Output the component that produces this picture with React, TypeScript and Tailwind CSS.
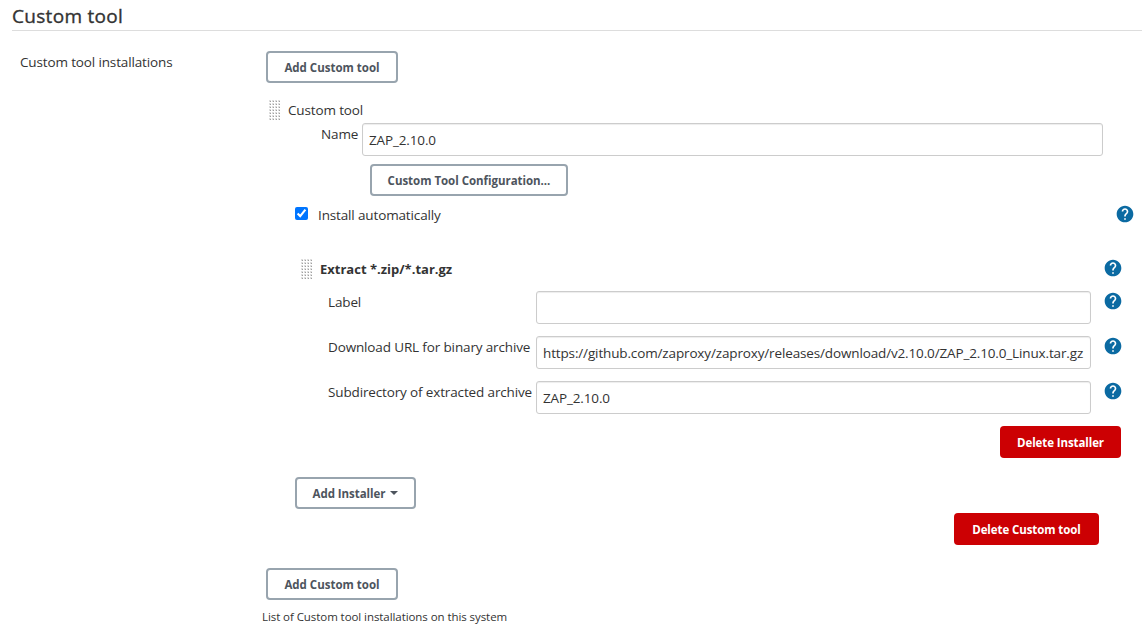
import type { ReactNode } from "react";
import { MdHelp } from "react-icons/md";

function Grip() {
  const rows = [0, 3, 6, 9, 12, 15, 18];
  const cols = [0, 3, 6, 9];
  return (
    <svg width="12" height="20" viewBox="0 0 12 20" className="block shrink-0" shapeRendering="crispEdges">
      {rows.map((y) =>
        cols.map((x) => (
          <g key={`${x}-${y}`}>
            <path d={`M${x} ${y}h2v2h-2z`} fill="#dedede" />
            <path d={`M${x + 1} ${y + 1}h1v1h-1z`} fill="#a0a0a0" />
          </g>
        ))
      )}
    </svg>
  );
}

function Help({ className = "" }: { className?: string }) {
  return (
    <button type="button" aria-label="Help" className={`block h-5 w-5 shrink-0 text-[#0b6aa2] ${className}`}>
      <MdHelp size={20} />
    </button>
  );
}

function Button({ children, className, danger }: { children: ReactNode; className: string; danger?: boolean }) {
  const tone = danger ? "bg-[#cc0003] tracking-[-0.09px] text-white" : "border-2 border-[#98a4ae] bg-white text-[#4d545d]";
  return (
    <button
      type="button"
      className={`flex h-8 shrink-0 items-center justify-center whitespace-nowrap rounded-[4px] pt-px text-[11.5px] font-bold ${tone} ${className}`}
    >
      {children}
    </button>
  );
}

function Field({ value, label, className }: { value: string; label: string; className: string }) {
  return (
    <input
      aria-label={label}
      defaultValue={value}
      className={`h-[33px] shrink-0 rounded-[3px] border border-[#ccc] bg-white px-1.5 text-[13.5px] tracking-[-0.14px] shadow-[inset_0_1px_1px_rgba(0,0,0,0.075)] outline-none ${className}`}
    />
  );
}

function InstallerRow({ label, value }: { label: string; value: string }) {
  return (
    <div className="flex h-[45px] items-start pl-[62px]">
      <span className="w-[208px] shrink-0 whitespace-nowrap pt-px">{label}</span>
      <Field label={label} value={value} className="w-[555px]" />
      <Help className="ml-3" />
    </div>
  );
}

export default function App() {
  return (
    <main className="h-[636px] w-[1142px] overflow-hidden bg-white font-['Open_Sans','Noto_Sans',sans-serif] text-[13.5px] leading-5 tracking-[-0.14px] text-[#333]">
      <h1 className="ml-3 h-[31px] border-b border-[#ddd] pt-0.5 text-[19px] font-medium leading-7 tracking-[0.3px] [-webkit-text-stroke:0.35px_#333]">
        Custom tool
      </h1>
      <div className="flex pt-5">
        <div className="w-[266px] shrink-0 pl-5 pt-px">Custom tool installations</div>
        <div className="flex-1">
          <Button className="w-[132px] tracking-normal">Add Custom tool</Button>

          <div className="mt-[17px] flex h-[23px] items-start pl-[3px]">
            <Grip />
            <span className="ml-[7px]">Custom tool</span>
          </div>
          <div className="flex items-start pl-[55px]">
            <span className="w-[41px] shrink-0 pt-px">Name</span>
            <Field label="Name" value="ZAP_2.10.0" className="w-[741px]" />
          </div>
          <Button className="ml-[104px] mt-2 w-[198px] tracking-[-0.03px]">Custom Tool Configuration...</Button>

          <div className="mt-2 flex h-5 items-start pl-[29px]">
            <input type="checkbox" defaultChecked aria-label="Install automatically" className="m-0 mt-[3px] h-[13px] w-[13px]" />
            <span className="ml-2.5 pt-px">Install automatically</span>
            <Help className="ml-auto mr-[7px]" />
          </div>

          <div className="mt-[34px] flex h-[33px] items-start pl-[35px]">
            <div className="pt-px"><Grip /></div>
            <span className="ml-[7px] pt-px text-[13px] font-bold tracking-normal">Extract *.zip/*.tar.gz</span>
            <Help className="ml-auto mr-[19px]" />
          </div>
          <InstallerRow label="Label" value="" />
          <InstallerRow
            label="Download URL for binary archive"
            value="https://github.com/zaproxy/zaproxy/releases/download/v2.10.0/ZAP_2.10.0_Linux.tar.gz"
          />
          <InstallerRow label="Subdirectory of extracted archive" value="ZAP_2.10.0" />

          <Button danger className="ml-auto mr-[21px] w-[121px]">Delete Installer</Button>
          <Button className="ml-[29px] mt-[19px] w-[121px] tracking-[-0.05px]">
            <span>Add Installer</span>
            <svg width="8" height="4" viewBox="0 0 8 4" className="mb-0.5 ml-[5px]"><path d="M0 0h8L4 4z" fill="currentColor" /></svg>
          </Button>
          <Button danger className="ml-auto mr-[43px] mt-1 w-[145px]">Delete Custom tool</Button>
          <Button className="mt-[23px] w-[132px] tracking-normal">Add Custom tool</Button>
          <p className="-ml-1 mt-[7px] text-[11.5px] tracking-[-0.07px]">List of Custom tool installations on this system</p>
        </div>
      </div>
    </main>
  );
}
